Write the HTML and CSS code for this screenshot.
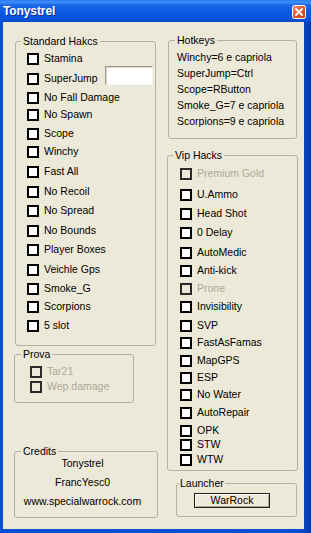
FILE: index.html
```html
<!DOCTYPE html>
<html>
<head>
<meta charset="utf-8">
<link rel="stylesheet" href="styles.css">
</head>
<body>
<div class="window">
  <div class="titlebar">
    <span class="title">Tonystrel</span>
    <span class="close">
      <svg width="14" height="14" viewBox="0 0 14 14">
        <defs>
          <linearGradient id="cg" x1="0" y1="0" x2="1" y2="1">
            <stop offset="0" stop-color="#f19a7c"/>
            <stop offset="0.45" stop-color="#de5a32"/>
            <stop offset="1" stop-color="#c23a12"/>
          </linearGradient>
        </defs>
        <rect x="0.5" y="0.5" width="13" height="13" rx="2" fill="url(#cg)" stroke="#ffffff"/>
        <path d="M4 4 L10 10 M10 4 L4 10" stroke="#ffffff" stroke-width="1.8" stroke-linecap="square"/>
      </svg>
    </span>
  </div>
  <div class="client">
    <div class="col col-left">
      <fieldset class="group g-standard">
        <legend>Standard Hakcs</legend>
        <div class="list list-standard">
          <div class="chk r20"><span class="box"></span><span class="txt">Stamina</span></div>
          <div class="chk r19"><span class="box"></span><span class="txt">SuperJump</span><span class="edit"></span></div>
          <div class="chk r17"><span class="box"></span><span class="txt">No Fall Damage</span></div>
          <div class="chk r19"><span class="box"></span><span class="txt">No Spawn</span></div>
          <div class="chk r18"><span class="box"></span><span class="txt">Scope</span></div>
          <div class="chk r20"><span class="box"></span><span class="txt">Winchy</span></div>
          <div class="chk r20"><span class="box"></span><span class="txt">Fast All</span></div>
          <div class="chk r19"><span class="box"></span><span class="txt">No Recoil</span></div>
          <div class="chk r20"><span class="box"></span><span class="txt">No Spread</span></div>
          <div class="chk r19"><span class="box"></span><span class="txt">No Bounds</span></div>
          <div class="chk r20"><span class="box"></span><span class="txt">Player Boxes</span></div>
          <div class="chk r19"><span class="box"></span><span class="txt">Veichle Gps</span></div>
          <div class="chk r18"><span class="box"></span><span class="txt">Smoke_G</span></div>
          <div class="chk r19"><span class="box"></span><span class="txt">Scorpions</span></div>
          <div class="chk r19"><span class="box"></span><span class="txt">5 slot</span></div>
        </div>
      </fieldset>
      <fieldset class="group g-prova">
        <legend>Prova</legend>
        <div class="list list-prova">
          <div class="chk r15 disabled"><span class="box"></span><span class="txt">Tar21</span></div>
          <div class="chk r15 disabled"><span class="box"></span><span class="txt">Wep damage</span></div>
        </div>
      </fieldset>
      <fieldset class="group g-credits">
        <legend>Credits</legend>
        <div class="credits">
          <div class="cline">Tonystrel</div>
          <div class="cline">FrancYesc0</div>
          <div class="cline">www.specialwarrock.com</div>
        </div>
      </fieldset>
    </div>
    <div class="col col-right">
      <fieldset class="group g-hotkeys">
        <legend>Hotkeys</legend>
        <div class="hotkeys">
          <div class="hk">Winchy=6 e capriola</div>
          <div class="hk">SuperJump=Ctrl</div>
          <div class="hk">Scope=RButton</div>
          <div class="hk">Smoke_G=7 e capriola</div>
          <div class="hk">Scorpions=9 e capriola</div>
        </div>
      </fieldset>
      <fieldset class="group g-vip">
        <legend>Vip Hacks</legend>
        <div class="list list-vip">
          <div class="chk r21 disabled"><span class="box"></span><span class="txt">Premium Gold</span></div>
          <div class="chk r19"><span class="box"></span><span class="txt">U.Ammo</span></div>
          <div class="chk r19"><span class="box"></span><span class="txt">Head Shot</span></div>
          <div class="chk r20"><span class="box"></span><span class="txt">0 Delay</span></div>
          <div class="chk r18"><span class="box"></span><span class="txt">AutoMedic</span></div>
          <div class="chk r18"><span class="box"></span><span class="txt">Anti-kick</span></div>
          <div class="chk r18 disabled"><span class="box"></span><span class="txt">Prone</span></div>
          <div class="chk r19"><span class="box"></span><span class="txt">Invisibility</span></div>
          <div class="chk r17"><span class="box"></span><span class="txt">SVP</span></div>
          <div class="chk r18"><span class="box"></span><span class="txt">FastAsFamas</span></div>
          <div class="chk r17"><span class="box"></span><span class="txt">MapGPS</span></div>
          <div class="chk r17"><span class="box"></span><span class="txt">ESP</span></div>
          <div class="chk r18"><span class="box"></span><span class="txt">No Water</span></div>
          <div class="chk r18"><span class="box"></span><span class="txt">AutoRepair</span></div>
          <div class="chk r14"><span class="box"></span><span class="txt">OPK</span></div>
          <div class="chk r15"><span class="box"></span><span class="txt">STW</span></div>
          <div class="chk r15"><span class="box"></span><span class="txt">WTW</span></div>
        </div>
      </fieldset>
      <fieldset class="group g-launcher">
        <legend>Launcher</legend>
        <div class="launcher">
          <button class="btn">WarRock</button>
        </div>
      </fieldset>
    </div>
  </div>
</div>
</body>
</html>
```
FILE: styles.css
```css
* { box-sizing: border-box; }
html, body { margin: 0; padding: 0; }
body {
  width: 311px;
  height: 533px;
  overflow: hidden;
  font-family: "Liberation Sans", Arial, sans-serif;
  font-size: 10.5px;
  color: #000;
}
.window {
  width: 311px;
  height: 533px;
  display: flex;
  flex-direction: column;
  background: linear-gradient(to right, #0b4fd8 0%, #0a4bd4 96%, #0838a8 100%);
  padding: 0 7px 4px 3px;
}
.titlebar {
  height: 22px;
  margin: 0 -7px 0 -3px;
  display: flex;
  align-items: center;
  justify-content: space-between;
  padding: 0 5px 0 3px;
  background: linear-gradient(to bottom, #2a7af6 0%, #3d8ff9 10%, #1a64e6 25%, #0b58e4 55%, #0a54dd 85%, #0849c8 100%);
}
.title {
  color: #fff;
  font-weight: bold;
  font-size: 12px;
  letter-spacing: -0.1px;
  text-shadow: 1px 1px 0 #0a2f8f;
}
.close {
  display: flex;
  width: 14px;
  height: 14px;
  margin-top: 2px;
}
.client {
  flex: 1;
  background: #ece9d8;
  display: flex;
  gap: 10px;
  padding: 12px 0 11px 11px;
}
.col {
  display: flex;
  flex-direction: column;
}
.col-left { width: 143px; }
.col-right { width: 130px; }

.group {
  margin: 0;
  padding: 0;
  border: 1px solid #b4b1a2;
  border-radius: 3px;
  min-width: 0;
}
.group legend {
  padding: 0 2px;
  margin-left: 5px;
  line-height: 12px;
  height: 12px;
  font-size: 10.5px;
}

/* Standard */
.g-standard { width: 141px; margin-left: 1px; margin-top: 1px; }
.list-standard { padding: 3px 2px 9px 11px; }
.g-prova { width: 120px; margin-top: 2px; }
.g-prova legend { margin-left: 6px; }
.list-prova { padding: 3px 0 9px 15px; }
.g-credits { width: 144px; margin-top: auto; }
.g-credits legend { margin-left: 6px; }
.credits {
  margin-top: -3px;
  padding: 0 7px 6px 0;
  text-align: center;
}
.cline { line-height: 19px; }

/* Right */
.g-hotkeys { width: 129px; margin-left: 1px; }
.g-hotkeys legend { margin-left: 6px; }
.hotkeys { padding: 3px 0 9px 8px; }
.hk { line-height: 16px; white-space: nowrap; }
.g-vip { width: 131px; margin-top: 10px; }
.list-vip { padding: 4px 0 4px 12px; }
.g-launcher { width: 121px; margin-left: 9px; margin-top: 6px; }
.g-launcher legend { margin-left: 2px; padding: 0 1px; }
.launcher { padding: 4px 0 8px 17px; }

/* checkboxes */
.chk {
  display: flex;
  align-items: flex-start;
  white-space: nowrap;
}
.r14 { height: 14px; }
.r15 { height: 15px; }
.r17 { height: 17px; }
.r18 { height: 18px; }
.r19 { height: 19px; }
.r20 { height: 20px; }
.r21 { height: 21px; }
.box {
  flex: none;
  width: 12px;
  height: 12px;
  margin-top: 3px;
  border: 2px solid #000;
  background: #fff;
}
.txt {
  margin-left: 5px;
  margin-top: 2px;
  line-height: 13px;
}
.disabled .box {
  border-color: #2a2a2a;
  background: transparent;
}
.disabled .txt { color: #aca899; }

.edit {
  margin-left: auto;
  margin-top: -4px;
  width: 48px;
  height: 19px;
  background: #fff;
  border: 1px solid;
  border-color: #9c9a8e #f4f3ee #f4f3ee #9c9a8e;
  box-shadow: inset 1px 1px 0 #d8d5c6;
}

.btn {
  display: block;
  width: 76px;
  height: 15px;
  padding: 0;
  margin: 0;
  font-family: "Liberation Sans", Arial, sans-serif;
  font-size: 10.5px;
  line-height: 13px;
  color: #000;
  background: #ece9d8;
  border: 1px solid #1e1e1e;
  box-shadow: inset 1px 1px 0 #ffffff, inset -1px -1px 0 #aca899;
  text-align: center;
}
```
